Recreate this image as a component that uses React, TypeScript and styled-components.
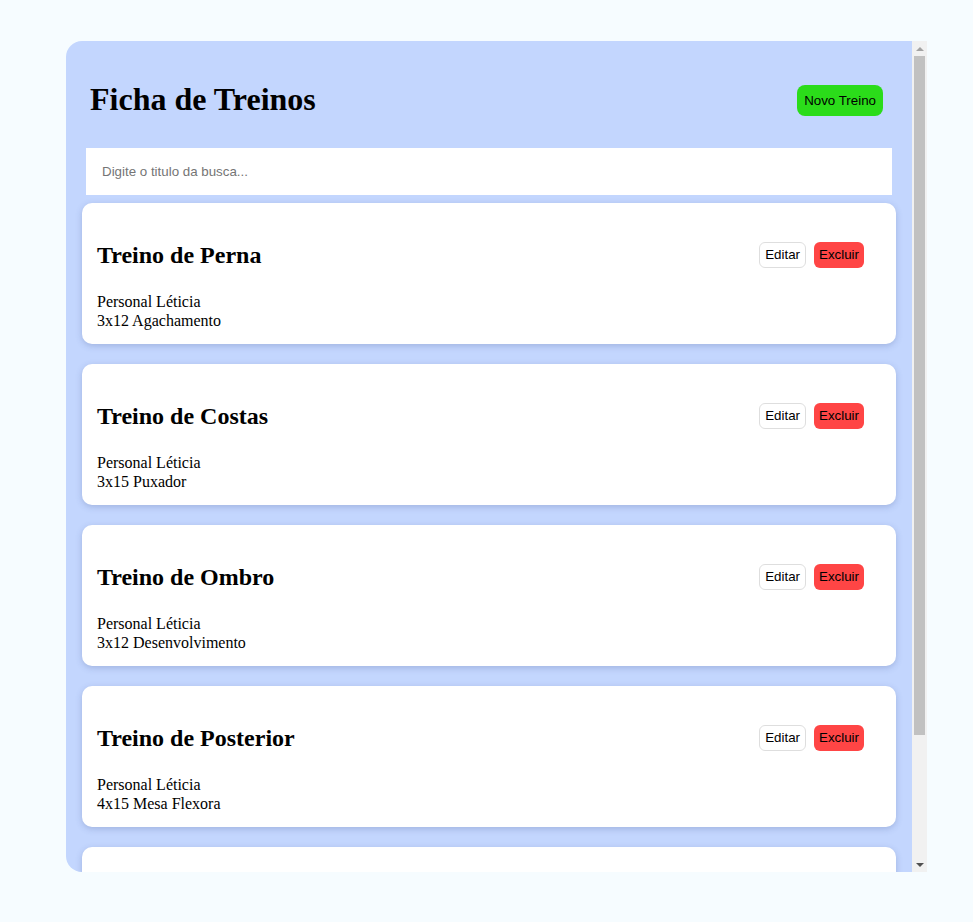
import styled, { createGlobalStyle } from 'styled-components';

const GlobalStyle = createGlobalStyle`
  html, body {
    margin: 0;
    padding: 0;
    background: #f6fcff;
  }
  body {
    font-family: "Liberation Serif", "Times New Roman", serif;
  }
`;

const Page = styled.div`
  padding: 41px 46px 50px 66px;
`;

const Frame = styled.div`
  display: flex;
  height: 831px;
`;

const Board = styled.main`
  flex: 1;
  min-width: 0;
  box-sizing: border-box;
  overflow: hidden;
  background: #c3d6fe;
  border-radius: 16px 0 0 16px;
  padding: 20px 16px 32px;
  display: flex;
  flex-direction: column;
  gap: 8px;

  & > * {
    flex-shrink: 0;
  }
`;

/* classic scrollbar rail, drawn because the window hides native scrollbars */
const Rail = styled.div`
  width: 15px;
  background: #f1f1f1;
  display: flex;
  flex-direction: column;
`;

const RailButton = styled.div`
  height: 15px;
  display: flex;
  align-items: center;
  justify-content: center;
  flex-shrink: 0;
`;

const Thumb = styled.div`
  margin: 0 2px;
  height: 679px;
  background: #c1c1c1;
`;

const RailRest = styled.div`
  flex: 1;
`;

const Header = styled.header`
  display: flex;
  align-items: center;
  justify-content: space-between;
  padding: 0 13px 0 8px;
`;

const Title = styled.h1`
  font-size: 32px;
  font-weight: 700;
  margin: 20px 0 22px;
  color: #000;
`;

const PrimaryButton = styled.button`
  font-family: "Liberation Sans", Arial, sans-serif;
  font-size: 13.333px;
  height: 31px;
  padding: 0 7px;
  border: none;
  border-radius: 8px;
  background: #2bdc1a;
  color: #000;
  cursor: pointer;
`;

const Search = styled.input`
  margin: 0 4px;
  height: 47px;
  box-sizing: border-box;
  border: none;
  outline: none;
  padding: 0 16px;
  font-family: "Liberation Sans", Arial, sans-serif;
  font-size: 13.333px;
  background: #fff;

  &::placeholder {
    color: #757575;
  }
`;

const List = styled.section`
  display: flex;
  flex-direction: column;
  gap: 20px;
`;

const Card = styled.article`
  background: #fff;
  border-radius: 10px;
  padding: 18px 15px 14px;
  box-shadow: 0 2px 6px rgba(60, 80, 140, 0.25);
  flex-shrink: 0;
`;

const CardHead = styled.div`
  display: flex;
  align-items: center;
  justify-content: space-between;
  padding-right: 17px;
`;

const CardTitle = styled.h2`
  font-size: 24px;
  font-weight: 700;
  margin: 21px 0 23px;
`;

const Actions = styled.div`
  display: flex;
  gap: 8px;
  margin-bottom: 4px;
`;

const SmallButton = styled.button<{ $danger?: boolean }>`
  font-family: "Liberation Sans", Arial, sans-serif;
  font-size: 13.333px;
  height: 26px;
  padding: 0 5px;
  border-radius: 6px;
  border: ${(p) => (p.$danger ? 'none' : '1px solid #dedede')};
  background: ${(p) => (p.$danger ? '#ff4545' : '#fff')};
  color: #000;
  cursor: pointer;
`;

const Line = styled.p`
  margin: 0;
  font-size: 16px;
  line-height: 19px;
`;

const treinos = [
  { titulo: 'Treino de Perna', personal: 'Personal Léticia', exercicio: '3x12 Agachamento' },
  { titulo: 'Treino de Costas', personal: 'Personal Léticia', exercicio: '3x15 Puxador' },
  { titulo: 'Treino de Ombro', personal: 'Personal Léticia', exercicio: '3x12 Desenvolvimento' },
  { titulo: 'Treino de Posterior', personal: 'Personal Léticia', exercicio: '4x15 Mesa Flexora' },
  { titulo: 'Treino de Peito', personal: 'Personal Léticia', exercicio: '4x10 Supino Reto' },
];

export default function App() {
  return (
    <>
      <GlobalStyle />
      <Page>
        <Frame>
          <Board>
            <Header>
              <Title>Ficha de Treinos</Title>
              <PrimaryButton>Novo Treino</PrimaryButton>
            </Header>
            <Search placeholder="Digite o titulo da busca..." />
            <List>
              {treinos.map((t) => (
                <Card key={t.titulo}>
                  <CardHead>
                    <CardTitle>{t.titulo}</CardTitle>
                    <Actions>
                      <SmallButton>Editar</SmallButton>
                      <SmallButton $danger>Excluir</SmallButton>
                    </Actions>
                  </CardHead>
                  <Line>{t.personal}</Line>
                  <Line>{t.exercicio}</Line>
                </Card>
              ))}
            </List>
          </Board>
          <Rail>
            <RailButton>
              <svg width="8" height="4" viewBox="0 0 8 4">
                <path d="M0 4 L4 0 L8 4 Z" fill="#a3a3a3" />
              </svg>
            </RailButton>
            <Thumb />
            <RailRest />
            <RailButton>
              <svg width="8" height="4" viewBox="0 0 8 4">
                <path d="M0 0 L4 4 L8 0 Z" fill="#505050" />
              </svg>
            </RailButton>
          </Rail>
        </Frame>
      </Page>
    </>
  );
}
